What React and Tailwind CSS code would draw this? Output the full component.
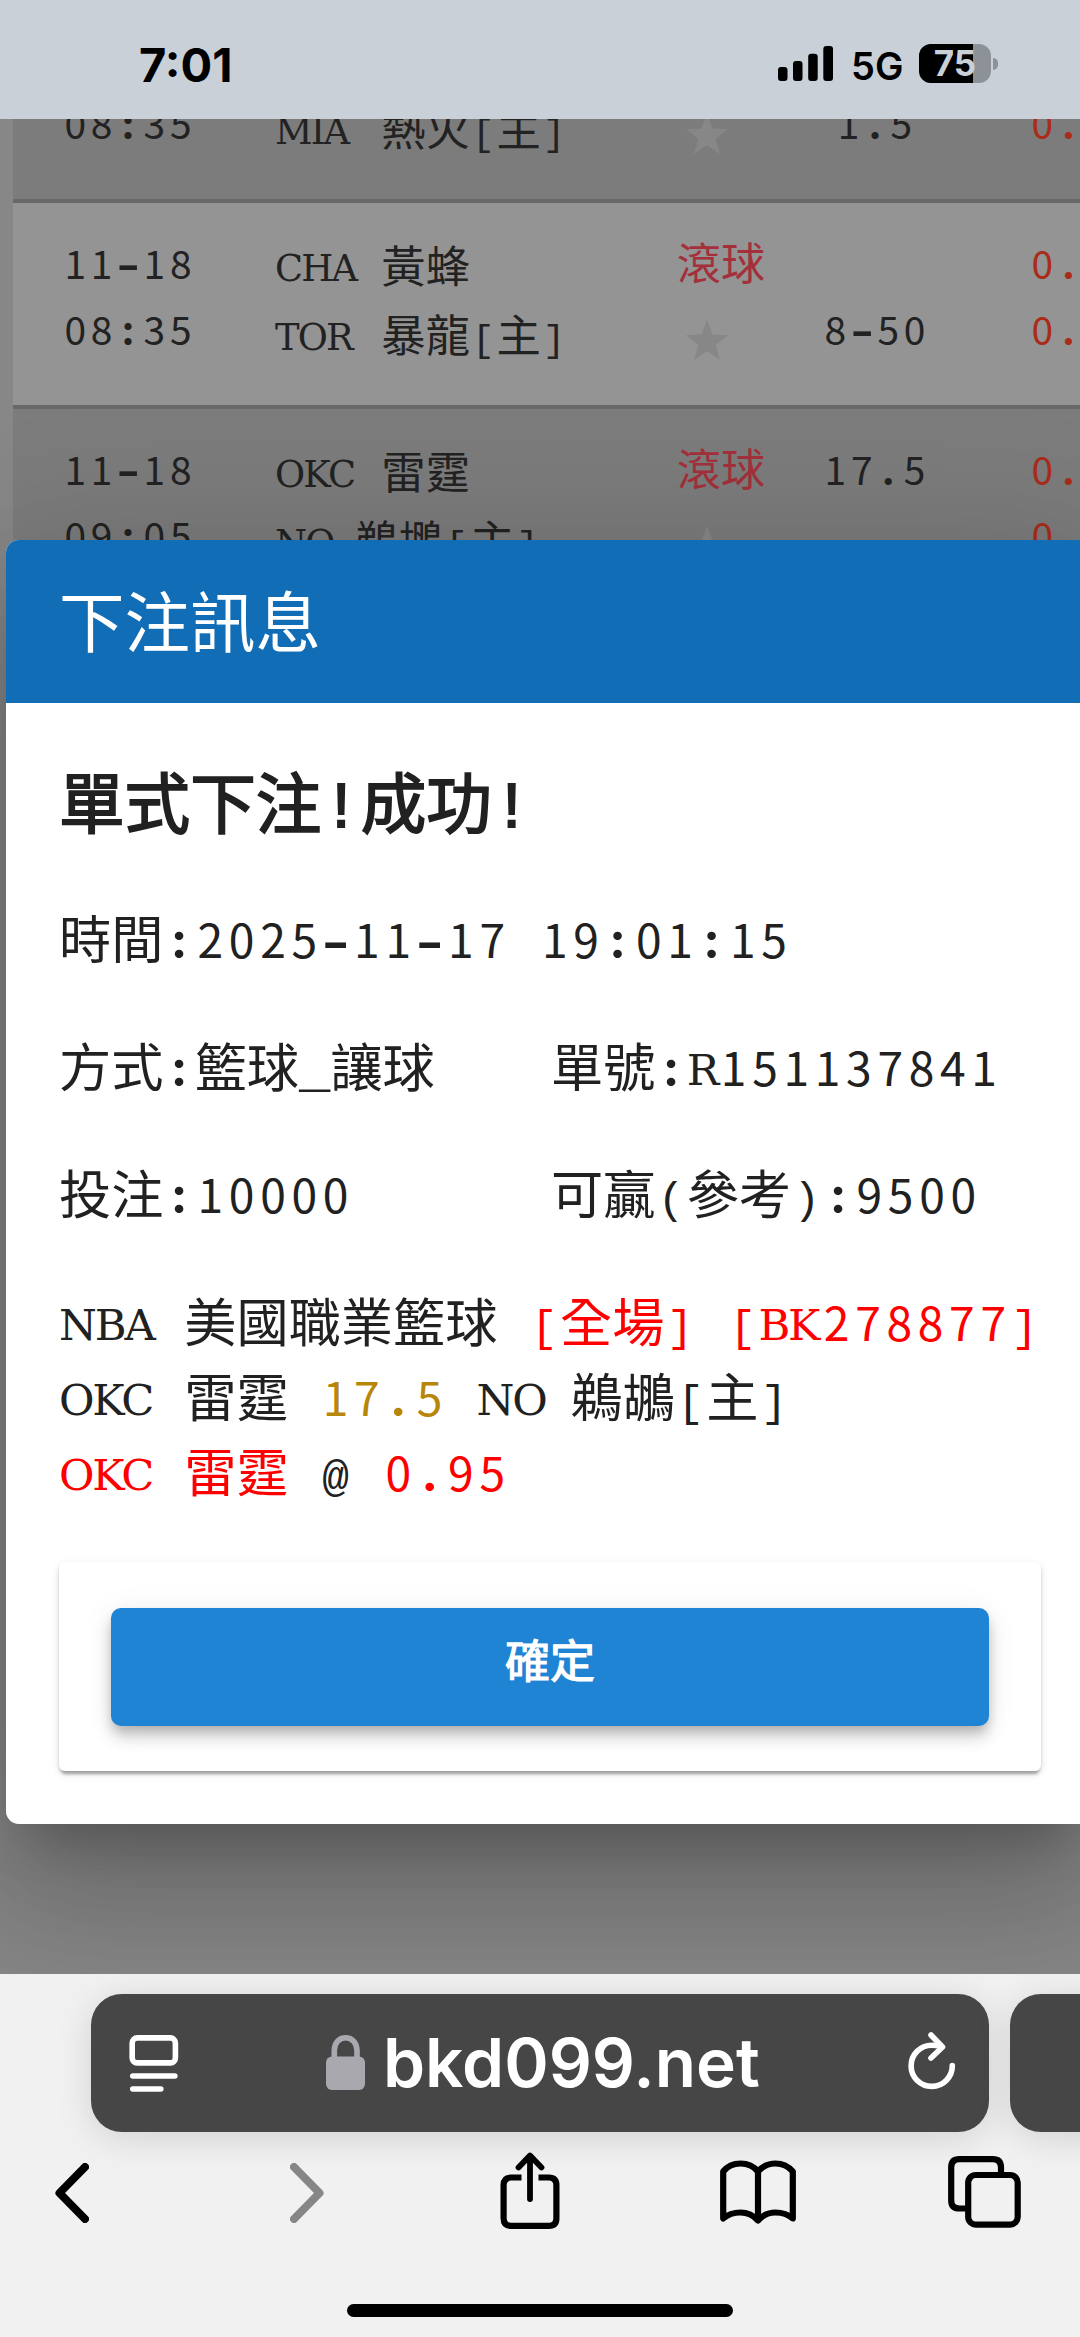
import React from "react";

const GAMES = [
  {
    id: "mia",
    date: "",
    time: "08:35",
    away: "",
    home: "MIA 熱火[主]",
    live: "",
    lines: ["", "1.5"],
    odds: ["", "0."],
    tone: "bg-[#7c7c7c]",
  },
  {
    id: "tor",
    date: "11-18",
    time: "08:35",
    away: "CHA 黃蜂",
    home: "TOR 暴龍[主]",
    live: "滾球",
    lines: ["", "8-50"],
    odds: ["0.", "0."],
    tone: "bg-[#949494]",
  },
  {
    id: "no",
    date: "11-18",
    time: "09:05",
    away: "OKC 雷霆",
    home: "NO 鵜鶘[主]",
    live: "滾球",
    lines: ["17.5", ""],
    odds: ["0.", "0."],
    tone: "bg-[#7c7c7c]",
  },
];

/**
 * Mono — typewriter text. Capitals, digits, marks and CJK each take their own
 * face, all of them kept on a 0.6em grid (1em for CJK).
 */
const CAPS_WIDTH = { 1: "w-[0.6em]", 2: "w-[1.2em]", 3: "w-[1.8em]" };

function Mono({ children }) {
  const parts = children.match(/[A-Z]+|[0-9]+|[\u3400-\u9fff]+|[:.]|-|[[\]()@]|[ _!]+/g) || [];
  return parts.map((part, i) => {
    if (/^[A-Z]/.test(part)) {
      return (
        <span key={i} className={["relative bottom-px inline-block leading-[0] whitespace-nowrap", CAPS_WIDTH[part.length]].join(" ")}>
          <span className="font-['DejaVu_Serif',serif] text-[0.83em] leading-[0] tracking-[-0.05em]">{part}</span>
        </span>
      );
    }
    if (/^[0-9]/.test(part)) {
      return (
        <span key={i} className="font-['Noto_Sans_CJK_TC',sans-serif] text-[0.885em] leading-[0] tracking-[0.123em] ml-[0.061em] mr-[-0.061em]">
          {part}
        </span>
      );
    }
    if (/^[\u3400-\u9fff]/.test(part)) {
      return <span key={i} className="relative top-px font-['Noto_Sans_CJK_TC',sans-serif] leading-[0]">{part}</span>;
    }
    if (part === "-") {
      return <span key={i} className="inline-block leading-[0] scale-x-140 scale-y-90 font-bold">{part}</span>;
    }
    if (/^[:.]/.test(part)) {
      return <span key={i} className="inline-block w-[0.6em] text-center leading-[0] font-['Lato',sans-serif] font-black">{part}</span>;
    }
    if (/^[[\]()@]/.test(part)) {
      return (
        <span key={i} className="inline-block w-[0.6em] text-center leading-[0]">
          <span className="text-[0.85em]">{part}</span>
        </span>
      );
    }
    return <span key={i} className="leading-[0] whitespace-pre">{part}</span>;
  });
}

function Star() {
  return (
    <svg viewBox="0 0 42 40" className="w-[42px] h-[40px] ml-[9px] mt-[20px]" fill="#878787">
      <path d="M21 0l5.6 14.6L42 15.3 29.6 25l4.4 15-13-8.8L8 40l4.4-15L0 15.3l15.4-.7z" />
    </svg>
  );
}

function GameRow({ game }) {
  return (
    <div className={["flex h-[206px] border-b-4 border-[#696969] text-[44px] text-[#222] whitespace-nowrap", game.tone].join(" ")}>
      <div className="w-[213px] shrink-0 pl-[49px] pt-[31px] leading-[66px]">
        <div className="h-[66px]"><Mono>{game.date}</Mono></div>
        <div><Mono>{game.time}</Mono></div>
      </div>
      <div className="w-[402px] shrink-0 pl-[49px] pt-[33px] text-[44.3px] leading-[68.5px]">
        <div className="h-[68.5px]"><Mono>{game.away}</Mono></div>
        <div><Mono>{game.home}</Mono></div>
      </div>
      <div className="w-[172px] shrink-0 pl-[49px] pt-[31px] leading-[66px] text-[#a3303a]">
        <div className="h-[66px]"><Mono>{game.live}</Mono></div>
        <Star />
      </div>
      <div className="w-[150px] shrink-0 pt-[31px] leading-[66px] text-center">
        <div className="h-[66px]"><Mono>{game.lines[0]}</Mono></div>
        <div className="h-[66px]"><Mono>{game.lines[1]}</Mono></div>
      </div>
      <div className="pl-[79px] pt-[31px] leading-[66px] text-[#a92c1b]">
        <div className="h-[66px]"><Mono>{game.odds[0]}</Mono></div>
        <div><Mono>{game.odds[1]}</Mono></div>
      </div>
    </div>
  );
}

function StatusBar() {
  return (
    <header className="relative z-10 h-[119px] shrink-0 bg-[#c9d0d8] flex font-['Inter',sans-serif] text-black">
      <div className="pl-[139px] pt-[37px] w-[778px] text-[47px] leading-[56px] font-bold">7:01</div>
      <svg viewBox="0 0 55 35" className="mt-[46px] w-[55px] h-[35px]">
        <rect x="0" y="21" width="9.5" height="14" rx="3" />
        <rect x="15" y="15" width="9.5" height="20" rx="3" />
        <rect x="30.2" y="7.7" width="9.5" height="27.3" rx="3" />
        <rect x="45.3" y="0" width="9.7" height="35" rx="3" />
      </svg>
      <div className="ml-[18px] mt-[43px] w-[68px] text-[38px] leading-[46px] font-semibold">5G</div>
      <div className="mt-[44px] h-[39px] flex items-center">
        <div className="relative w-[72px] h-[39px] rounded-[12px] overflow-hidden bg-[#8d9299]">
          <div className="h-full w-[54px] bg-black" />
          <span className="absolute inset-0 text-center text-[35px] leading-[39px] font-bold text-[#c9d0d8]">75</span>
        </div>
        <div className="ml-[2px] w-[5px] h-[12px] rounded-r-full bg-[#8d9299]" />
      </div>
    </header>
  );
}

function BetDialog() {
  return (
    <section className="absolute left-[6px] top-[421px] w-[1086px] h-[1284px] rounded-[13px] overflow-clip bg-white text-[#212121]">
      <div className="h-[163px] bg-[#116db5] pl-[53px] pb-[5px] flex items-center text-white text-[65.5px] font-['Noto_Sans_CJK_TC',sans-serif]">
        下注訊息
      </div>
      <div className="pl-[53px] pr-[51px] pt-[60px] text-[52.2px] leading-[75px] whitespace-nowrap">
        <h2 className="text-[65.6px] leading-[94px] [-webkit-text-stroke:1.8px_#212121]"><Mono>單式下注!成功!</Mono></h2>
        <p className="mt-[50px]"><Mono>時間:2025-11-17 19:01:15</Mono></p>
        <div className="mt-[52.5px] grid grid-cols-[492px_1fr] gap-y-[52.5px]">
          <p><Mono>方式:籃球_讓球</Mono></p>
          <p><Mono>單號:R151137841</Mono></p>
          <p><Mono>投注:10000</Mono></p>
          <p><Mono>可贏(參考):9500</Mono></p>
        </div>
        <div className="mt-[52.5px]">
          <p>
            <Mono>NBA 美國職業籃球 </Mono>
            <span className="text-[#ff0000]"><Mono>[全場] [BK278877]</Mono></span>
          </p>
          <p>
            <Mono>OKC 雷霆 </Mono>
            <span className="text-[#b8860b]"><Mono>17.5</Mono></span>
            <Mono> NO 鵜鶘[主]</Mono>
          </p>
          <p>
            <span className="text-[#ff0000]"><Mono>OKC 雷霆</Mono></span>
            <Mono> @ </Mono>
            <span className="text-[#ff0000]"><Mono>0.95</Mono></span>
          </p>
        </div>
        <div className="mt-[47px] w-[982px] h-[209px] rounded-[6px] bg-white px-[52px] pt-[46px] shadow-[0_6px_3px_-3px_rgba(0,0,0,0.2),0_3px_3px_rgba(0,0,0,0.14),0_3px_9px_rgba(0,0,0,0.12)]">
          <button
            type="button"
            className="block w-full h-[118px] pb-[16px] rounded-[10px] bg-[#2084d4] text-white text-[45px] [-webkit-text-stroke:1.2px_white] font-['Noto_Sans_CJK_TC',sans-serif] shadow-[0_6px_12px_-3px_rgba(0,0,0,0.2),0_12px_15px_rgba(0,0,0,0.14),0_3px_30px_rgba(0,0,0,0.08)]"
          >
            確定
          </button>
        </div>
      </div>
    </section>
  );
}

function AddressBar() {
  return (
    <div className="flex pl-[91px] pt-[20px]">
      <div className="w-[898px] h-[138px] shrink-0 rounded-[31px] bg-[#464646] flex shadow-[0_6px_36px_rgba(0,0,0,0.13)]">
        <svg viewBox="0 0 50 57" className="ml-[38px] mt-[41px] w-[50px] h-[57px]" fill="none" stroke="#fff" strokeWidth="5.6" strokeLinecap="round">
          <rect x="3.2" y="2.9" width="43.2" height="25" rx="5" />
          <path d="M3.8 41h42M3.8 54h28" />
        </svg>
        <svg viewBox="0 0 39 55" className="ml-[147px] mt-[41px] w-[39px] h-[55px]">
          <rect x="0" y="21.5" width="39" height="33.5" rx="6" fill="#a9a8ae" />
          <path d="M8.3 23v-7.5C8.3 8 13 2.8 19.6 2.8S31 8 31 15.5V23" fill="none" stroke="#a9a8ae" strokeWidth="5.6" />
        </svg>
        <span className="ml-[18px] mt-[29px] w-[525px] text-[67.5px] leading-[80px] font-semibold font-['Inter',sans-serif] text-white">bkd099.net</span>
        <svg viewBox="0 0 48 58" className="mt-[38px] w-[48px] h-[58px] shrink-0" fill="none" stroke="#fff" strokeWidth="5.6" strokeLinecap="round" strokeLinejoin="round">
          <path d="M44.3 33.5A20.6 20.6 0 1 1 23.7 13.2q5 0 9 1" />
          <path d="M23 3l11.5 12L23 26" />
        </svg>
      </div>
      <div className="ml-[21px] w-[200px] h-[138px] shrink-0 rounded-[31px] bg-[#464646] shadow-[0_6px_36px_rgba(0,0,0,0.13)]" />
    </div>
  );
}

function BrowserToolbar() {
  return (
    <nav className="relative flex h-[80px] mt-[20px] pl-[55px] text-black">
      <svg viewBox="0 0 34 60" className="mt-[11px] w-[34px] h-[60px]" fill="none" stroke="#000" strokeWidth="8" strokeLinecap="round" strokeLinejoin="round">
        <path d="M30 4L4.5 30 30 56" />
      </svg>
      <svg viewBox="0 0 34 60" className="ml-[201px] mt-[11px] w-[34px] h-[60px]" fill="none" stroke="#868686" strokeWidth="8" strokeLinecap="round" strokeLinejoin="round">
        <path d="M4 4l25.5 26L4 56" />
      </svg>
      <svg viewBox="0 0 60 78" className="ml-[176px] w-[60px] h-[78px]" fill="none" stroke="#000" strokeWidth="6.2" strokeLinejoin="round">
        <path d="M21.5 25.5H11.2q-7.6 0-7.6 7.6v33.2q0 7.6 7.6 7.6h37.6q7.6 0 7.6-7.6V33.1q0-7.6-7.6-7.6H38.5" />
        <path d="M30 47V4M18.5 15.5L30 3.5l11.5 12" strokeWidth="5.8" strokeLinecap="round" />
      </svg>
      <svg viewBox="0 0 76 64" className="ml-[160px] mt-[8px] w-[76px] h-[64px]" fill="none" stroke="#000" strokeWidth="6.2" strokeLinejoin="round" strokeLinecap="round">
        <path d="M3.2 11.5Q9.5 3.5 20.5 3.5T38 11.5Q45 3.5 55.5 3.5T72.8 11.5V58.5Q66 52.5 55.5 52.5T38 60.5Q31 52.5 20.5 52.5T3.2 58.5z" />
        <path d="M38 11.5V60" />
      </svg>
      <svg viewBox="0 0 73 72" className="ml-[152px] mt-[4px] w-[73px] h-[72px]" fill="none" stroke="#000" strokeWidth="6.2">
        <path d="M53 17V11.5q0-8.3-8.3-8.3H11.4q-8.2 0-8.2 8.3v32.7q0 8.3 8.2 8.3H20" />
        <rect x="20.2" y="19" width="49.5" height="49.6" rx="7.5" />
      </svg>
    </nav>
  );
}

export default function App() {
  return (
    <div className="relative flex flex-col w-[1080px] h-[2337px] overflow-hidden bg-[#878787] font-['Liberation_Mono','Noto_Sans_CJK_TC',monospace]">
      <StatusBar />
      <main className="relative h-[1855px] shrink-0 overflow-hidden">
        <div className="ml-[13px] mt-[-122px] w-[1100px]">
          {GAMES.map((game) => <GameRow key={game.id} game={game} />)}
        </div>
        {/* dialog elevation */}
        <div className="absolute left-[6px] top-[421px] w-[1086px] h-[1284px] rounded-[13px] shadow-[0_36px_49px_-23px_rgba(0,0,0,0.2),0_78px_124px_10px_rgba(0,0,0,0.14),0_29px_150px_26px_rgba(0,0,0,0.12)]" />
        <BetDialog />
      </main>
      <footer className="h-[363px] shrink-0 overflow-hidden bg-[#f1f1f1]">
        <AddressBar />
        <BrowserToolbar />
        <div className="mx-auto mt-[72px] w-[386px] h-[13px] rounded-full bg-black" />
      </footer>
    </div>
  );
}
